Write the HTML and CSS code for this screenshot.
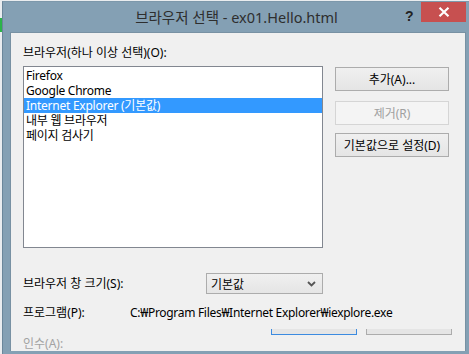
FILE: index.html
```html
<!DOCTYPE html>
<html lang="ko">
<head>
<meta charset="utf-8">
<link rel="stylesheet" href="styles.css">
</head>
<body>
<div class="desk-green"></div>
<div class="window">
  <div class="titlebar">
    <div class="title">브라우저 선택 - ex01.Hello.html</div>
    <div class="help">?</div>
    <div class="close">
      <svg width="12" height="10" viewBox="0 0 12 10"><path d="M1.5 0.8 L10.5 9.2 M10.5 0.8 L1.5 9.2" stroke="#fff" stroke-width="2.2" fill="none"/></svg>
    </div>
  </div>
  <div class="client">
    <div class="label">브라우저(하나 이상 선택)(O):</div>
    <div class="main">
      <div class="listbox">
        <div class="item">Firefox</div>
        <div class="item">Google Chrome</div>
        <div class="item selected">Internet Explorer (기본값)</div>
        <div class="item">내부 웹 브라우저</div>
        <div class="item">페이지 검사기</div>
      </div>
      <div class="buttons">
        <div class="btn b1">추가(A)...</div>
        <div class="btn b2 disabled">제거(R)</div>
        <div class="btn b3">기본값으로 설정(D)</div>
      </div>
    </div>
    <div class="row size-row">
      <div class="row-label w183">브라우저 창 크기(S):</div>
      <div class="select">
        <span>기본값</span>
        <svg width="9" height="6" viewBox="0 0 9 6"><path d="M1 1 L4.5 4.5 L8 1" stroke="#555" stroke-width="1.8" fill="none"/></svg>
      </div>
    </div>
    <div class="row prog-row">
      <div class="row-label w107">프로그램(P):</div>
      <div class="path">C:₩Program Files₩Internet Explorer₩iexplore.exe</div>
    </div>
    <div class="partial">
      <div class="pbtn blue"></div>
      <div class="pbtn gray"></div>
    </div>
    <div class="args">인수(A):</div>
  </div>
</div>
</body>
</html>
```
FILE: styles.css
```css
html, body {
  margin: 0;
  padding: 0;
}
body {
  width: 469px;
  height: 354px;
  overflow: hidden;
  background: #e9ecef;
  position: relative;
  font-family: "Noto Sans", "Noto Sans CJK KR", sans-serif;
  font-size: 12px;
  color: #000;
}
.desk-green {
  position: absolute;
  left: 0;
  top: 18px;
  width: 2px;
  height: 14px;
  background: #2cb34a;
}
.window {
  margin: 1px 0 0 2px;
  width: 470px;
  height: 353px;
  box-sizing: border-box;
  background: #84a0b4;
  border-left: 1px solid #6a869a;
  border-top: 1px solid #7d98ab;
}
.titlebar {
  position: relative;
  height: 30px;
}
.title {
  width: 467px;
  text-align: center;
  font-size: 14.5px;
  line-height: 30px;
  color: #2e2e2e;
  font-family: "Noto Sans", "Noto Sans CJK KR", sans-serif;
}
.help {
  position: absolute;
  left: 402px;
  top: 6px;
  font-size: 14px;
  font-weight: bold;
  color: #222;
  line-height: 16px;
  font-family: "Liberation Sans", sans-serif;
}
.close {
  position: absolute;
  left: 418px;
  top: 0px;
  width: 45px;
  height: 20px;
  background: #c75050;
  display: flex;
  align-items: center;
  justify-content: center;
}
.client {
  margin-left: 7px;
  width: 456px;
  height: 319px;
  box-sizing: border-box;
  background: #f0f0f0;
  border: 1px solid #7891a3;
  border-bottom: none;
  overflow: hidden;
  padding: 12px 0 0 12px;
}
.label {
  line-height: 15px;
}
.main {
  display: flex;
  margin-top: 6px;
}
.listbox {
  width: 300px;
  height: 182px;
  box-sizing: border-box;
  background: #fff;
  border: 1px solid #828790;
  padding: 1px 0 0 0;
}
.item {
  height: 15px;
  line-height: 15px;
  padding-left: 2px;
  white-space: nowrap;
  letter-spacing: -0.25px;
}
.item.selected {
  background: #3399ff;
  color: #fff;
}
.buttons {
  margin-left: 12px;
  display: flex;
  flex-direction: column;
}
.btn {
  width: 114px;
  height: 24px;
  box-sizing: border-box;
  border: 1px solid #acacac;
  background: linear-gradient(#f0f0f0, #e5e5e5);
  display: flex;
  align-items: center;
  justify-content: center;
  line-height: 15px;
}
.b1 { margin-top: 1px; }
.b2 { margin-top: 10px; }
.b3 { margin-top: 8px; }
.btn.disabled {
  border-color: #d5d5d5;
  background: #f4f4f4;
  color: #a0a0a0;
}
.row {
  display: flex;
  align-items: center;
}
.size-row {
  margin-top: 25px;
  height: 21px;
}
.row-label {
  flex: none;
  line-height: 15px;
}
.w183 { width: 183px; }
.w107 { width: 107px; }
.select {
  width: 117px;
  height: 21px;
  box-sizing: border-box;
  border: 1px solid #acacac;
  background: linear-gradient(#f0f0f0, #e5e5e5);
  display: flex;
  align-items: center;
  justify-content: space-between;
  padding: 0 6px 0 4px;
}
.prog-row {
  margin-top: 10px;
  height: 16px;
}
.path {
  white-space: nowrap;
  letter-spacing: -0.3px;
}
.partial {
  display: flex;
  margin-top: 9px;
  margin-left: 248px;
  gap: 9px;
  height: 6px;
}
.pbtn {
  width: 86px;
  height: 6px;
  box-sizing: border-box;
  border: 1px solid #acacac;
  border-top: none;
  background: #e5e5e5;
}
.pbtn.blue {
  border-color: #3c8be0;
}
.args {
  margin-top: 1px;
  line-height: 15px;
  color: #a3a3a3;
}
```
